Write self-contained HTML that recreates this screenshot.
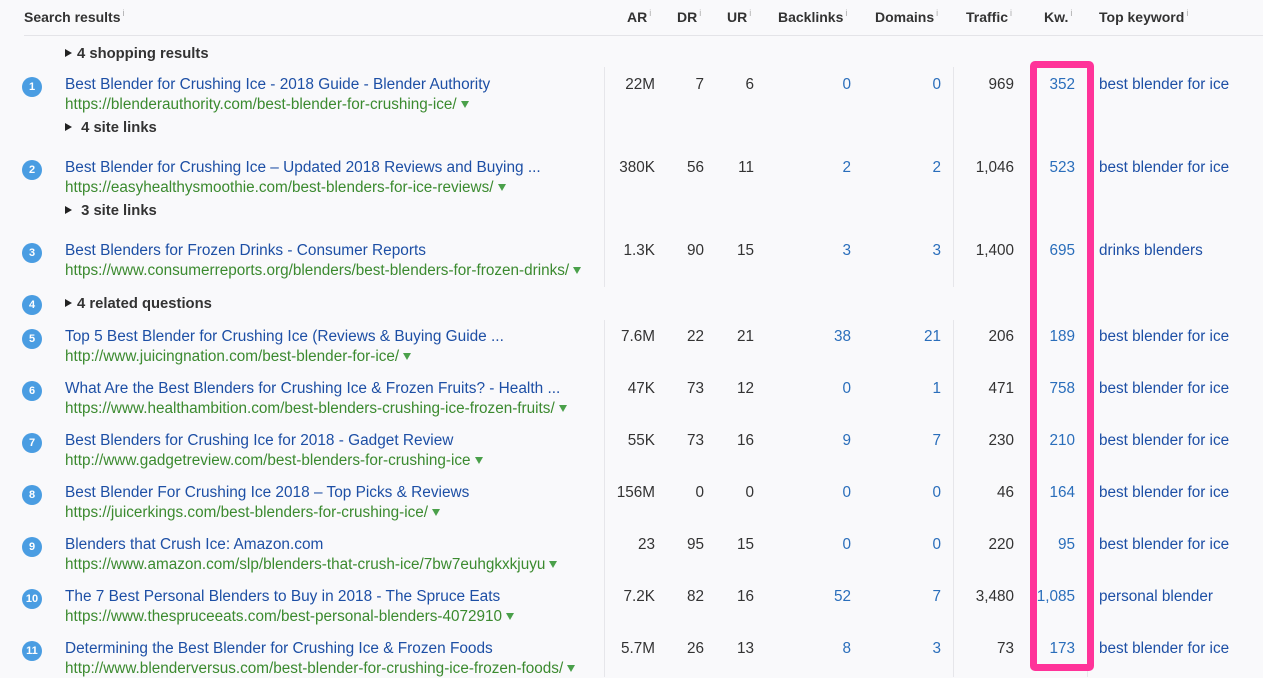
<!DOCTYPE html>
<html><head><meta charset="utf-8"><style>
body{margin:0;width:1263px;height:677px;background:#f9f9fb;font-family:"Liberation Sans",Arial,sans-serif;position:relative;overflow:hidden}
div{position:absolute;white-space:nowrap}
.h{top:5px;font-size:14px;font-weight:bold;color:#333;line-height:16px}
.h sup{font-size:9px;color:#aaa;font-weight:normal;vertical-align:6px;margin-left:2px}
.t,.u,.n,.k,.b,.c{margin-top:2px}
.t{left:65px;font-size:15.4px;color:#1d4fa5;line-height:18px}
.u{left:65px;font-size:15.3px;color:#3b8a2f;line-height:18px}
.u:after{content:"";display:inline-block;border-left:4.5px solid transparent;border-right:4.5px solid transparent;border-top:7px solid #4aa04a;margin-left:4px;vertical-align:1px}
.b{font-size:14.8px;font-weight:bold;color:#333;line-height:18px}
.b:before{content:"";display:inline-block;border-top:4.5px solid transparent;border-bottom:4.5px solid transparent;border-left:7px solid #222;margin-right:5px;vertical-align:1px}
.c{left:22px;width:20px;height:20px;border-radius:50%;background:#4a9de2;color:#fff;font-size:11px;font-weight:bold;text-align:center;line-height:20px;transform:translateY(-1px)}
.n{font-size:15.3px;color:#333;line-height:18px;text-align:right;width:80px}
.bl{color:#2a6ebb}
.k{left:1099px;font-size:15.3px;color:#1d4fa5;line-height:18px}
.v{width:1px;background:#e6e6ea}
</style></head><body>
<div class="h" style="left:24px">Search results<sup>i</sup></div>
<div class="h" style="left:627px">AR<sup>i</sup></div>
<div class="h" style="left:677px">DR<sup>i</sup></div>
<div class="h" style="left:727px">UR<sup>i</sup></div>
<div class="h" style="left:778px">Backlinks<sup>i</sup></div>
<div class="h" style="left:875px">Domains<sup>i</sup></div>
<div class="h" style="left:966px">Traffic<sup>i</sup></div>
<div class="h" style="left:1044px">Kw.<sup>i</sup></div>
<div class="h" style="left:1099px">Top keyword<sup>i</sup></div>
<div style="left:24px;top:35px;width:1239px;height:1px;background:#e4e4e8"></div>

<div class="v" style="left:604px;top:67px;height:220px"></div>
<div class="v" style="left:604px;top:320px;height:357px"></div>
<div class="v" style="left:953px;top:67px;height:220px"></div>
<div class="v" style="left:953px;top:320px;height:357px"></div>
<div class="v" style="left:1087px;top:67px;height:220px"></div>
<div class="v" style="left:1087px;top:320px;height:357px"></div>

<div class="b" style="left:65px;top:43px">4 shopping results</div>

<div class="c" style="top:76px">1</div>
<div class="t" style="top:74px">Best Blender for Crushing Ice - 2018 Guide - Blender Authority</div>
<div class="u" style="top:94px">https://blenderauthority.com/best-blender-for-crushing-ice/</div>
<div class="b" style="left:65px;top:117px">&nbsp;4 site links</div>

<div class="c" style="top:159px">2</div>
<div class="t" style="top:157px">Best Blender for Crushing Ice – Updated 2018 Reviews and Buying ...</div>
<div class="u" style="top:177px">https://easyhealthysmoothie.com/best-blenders-for-ice-reviews/</div>
<div class="b" style="left:65px;top:200px">&nbsp;3 site links</div>

<div class="c" style="top:242px">3</div>
<div class="t" style="top:240px">Best Blenders for Frozen Drinks - Consumer Reports</div>
<div class="u" style="top:260px">https://www.consumerreports.org/blenders/best-blenders-for-frozen-drinks/</div>

<div class="c" style="top:294px">4</div>
<div class="b" style="left:65px;top:293px">4 related questions</div>

<div class="c" style="top:328px">5</div>
<div class="t" style="top:326px">Top 5 Best Blender for Crushing Ice (Reviews &amp; Buying Guide ...</div>
<div class="u" style="top:346px">http://www.juicingnation.com/best-blender-for-ice/</div>
<div class="c" style="top:380px">6</div>
<div class="t" style="top:378px">What Are the Best Blenders for Crushing Ice &amp; Frozen Fruits? - Health ...</div>
<div class="u" style="top:398px">https://www.healthambition.com/best-blenders-crushing-ice-frozen-fruits/</div>
<div class="c" style="top:432px">7</div>
<div class="t" style="top:430px">Best Blenders for Crushing Ice for 2018 - Gadget Review</div>
<div class="u" style="top:450px">http://www.gadgetreview.com/best-blenders-for-crushing-ice</div>
<div class="c" style="top:484px">8</div>
<div class="t" style="top:482px">Best Blender For Crushing Ice 2018 – Top Picks &amp; Reviews</div>
<div class="u" style="top:502px">https://juicerkings.com/best-blenders-for-crushing-ice/</div>
<div class="c" style="top:536px">9</div>
<div class="t" style="top:534px">Blenders that Crush Ice: Amazon.com</div>
<div class="u" style="top:554px">https://www.amazon.com/slp/blenders-that-crush-ice/7bw7euhgkxkjuyu</div>
<div class="c" style="top:588px">10</div>
<div class="t" style="top:586px">The 7 Best Personal Blenders to Buy in 2018 - The Spruce Eats</div>
<div class="u" style="top:606px">https://www.thespruceeats.com/best-personal-blenders-4072910</div>
<div class="c" style="top:640px">11</div>
<div class="t" style="top:638px">Determining the Best Blender for Crushing Ice &amp; Frozen Foods</div>
<div class="u" style="top:658px">http://www.blenderversus.com/best-blender-for-crushing-ice-frozen-foods/</div>

<div class="n" style="left:575px;top:74px">22M</div><div class="n" style="left:624px;top:74px">7</div><div class="n" style="left:674px;top:74px">6</div><div class="n bl" style="left:771px;top:74px">0</div><div class="n bl" style="left:861px;top:74px">0</div><div class="n" style="left:934px;top:74px">969</div><div class="n bl" style="left:995px;top:74px">352</div><div class="k" style="top:74px">best blender for ice</div>
<div class="n" style="left:575px;top:157px">380K</div><div class="n" style="left:624px;top:157px">56</div><div class="n" style="left:674px;top:157px">11</div><div class="n bl" style="left:771px;top:157px">2</div><div class="n bl" style="left:861px;top:157px">2</div><div class="n" style="left:934px;top:157px">1,046</div><div class="n bl" style="left:995px;top:157px">523</div><div class="k" style="top:157px">best blender for ice</div>
<div class="n" style="left:575px;top:240px">1.3K</div><div class="n" style="left:624px;top:240px">90</div><div class="n" style="left:674px;top:240px">15</div><div class="n bl" style="left:771px;top:240px">3</div><div class="n bl" style="left:861px;top:240px">3</div><div class="n" style="left:934px;top:240px">1,400</div><div class="n bl" style="left:995px;top:240px">695</div><div class="k" style="top:240px">drinks blenders</div>
<div class="n" style="left:575px;top:326px">7.6M</div><div class="n" style="left:624px;top:326px">22</div><div class="n" style="left:674px;top:326px">21</div><div class="n bl" style="left:771px;top:326px">38</div><div class="n bl" style="left:861px;top:326px">21</div><div class="n" style="left:934px;top:326px">206</div><div class="n bl" style="left:995px;top:326px">189</div><div class="k" style="top:326px">best blender for ice</div>
<div class="n" style="left:575px;top:378px">47K</div><div class="n" style="left:624px;top:378px">73</div><div class="n" style="left:674px;top:378px">12</div><div class="n bl" style="left:771px;top:378px">0</div><div class="n bl" style="left:861px;top:378px">1</div><div class="n" style="left:934px;top:378px">471</div><div class="n bl" style="left:995px;top:378px">758</div><div class="k" style="top:378px">best blender for ice</div>
<div class="n" style="left:575px;top:430px">55K</div><div class="n" style="left:624px;top:430px">73</div><div class="n" style="left:674px;top:430px">16</div><div class="n bl" style="left:771px;top:430px">9</div><div class="n bl" style="left:861px;top:430px">7</div><div class="n" style="left:934px;top:430px">230</div><div class="n bl" style="left:995px;top:430px">210</div><div class="k" style="top:430px">best blender for ice</div>
<div class="n" style="left:575px;top:482px">156M</div><div class="n" style="left:624px;top:482px">0</div><div class="n" style="left:674px;top:482px">0</div><div class="n bl" style="left:771px;top:482px">0</div><div class="n bl" style="left:861px;top:482px">0</div><div class="n" style="left:934px;top:482px">46</div><div class="n bl" style="left:995px;top:482px">164</div><div class="k" style="top:482px">best blender for ice</div>
<div class="n" style="left:575px;top:534px">23</div><div class="n" style="left:624px;top:534px">95</div><div class="n" style="left:674px;top:534px">15</div><div class="n bl" style="left:771px;top:534px">0</div><div class="n bl" style="left:861px;top:534px">0</div><div class="n" style="left:934px;top:534px">220</div><div class="n bl" style="left:995px;top:534px">95</div><div class="k" style="top:534px">best blender for ice</div>
<div class="n" style="left:575px;top:586px">7.2K</div><div class="n" style="left:624px;top:586px">82</div><div class="n" style="left:674px;top:586px">16</div><div class="n bl" style="left:771px;top:586px">52</div><div class="n bl" style="left:861px;top:586px">7</div><div class="n" style="left:934px;top:586px">3,480</div><div class="n bl" style="left:995px;top:586px">1,085</div><div class="k" style="top:586px">personal blender</div>
<div class="n" style="left:575px;top:638px">5.7M</div><div class="n" style="left:624px;top:638px">26</div><div class="n" style="left:674px;top:638px">13</div><div class="n bl" style="left:771px;top:638px">8</div><div class="n bl" style="left:861px;top:638px">3</div><div class="n" style="left:934px;top:638px">73</div><div class="n bl" style="left:995px;top:638px">173</div><div class="k" style="top:638px">best blender for ice</div>

<div style="left:1030px;top:61px;width:50px;height:596px;border:7px solid #ff3399;border-radius:5px"></div>
</body></html>
